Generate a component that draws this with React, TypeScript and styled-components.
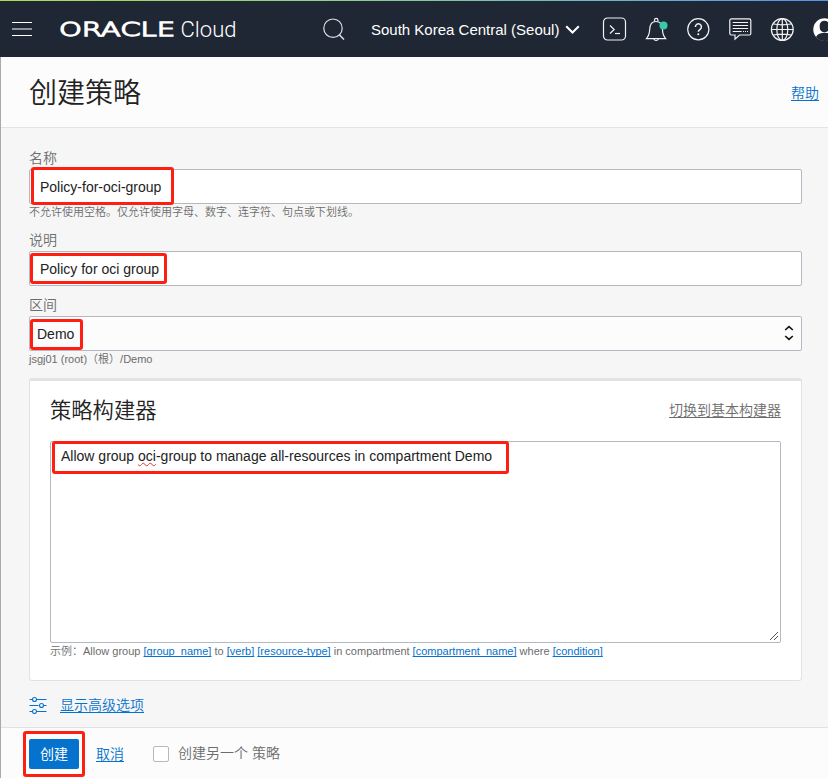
import React from "react";
import styled, { createGlobalStyle } from "styled-components";

const GlobalStyle = createGlobalStyle`
  * { box-sizing: border-box; }
  html, body { margin: 0; padding: 0; }
  body {
    width: 828px;
    height: 778px;
    overflow: hidden;
    background: #f6f6f6;
    color: #222;
    font-family: "Liberation Sans", "Noto Sans CJK SC", sans-serif;
    font-size: 14px;
    font-weight: 350;
  }
`;

const Page = styled.div`
  width: 828px;
  height: 778px;
  display: flex;
  flex-direction: column;
  overflow: hidden;
`;

const Header = styled.header`
  height: 57px;
  flex: none;
  display: flex;
  align-items: center;
  padding: 1px 0 0 12px;
  background:
    linear-gradient(90deg, #aedb55 0%, #8ed08a 40%, #6fb7c4 72%, #4f94f0 100%) top / 100% 1px no-repeat,
    #1e2733;
  overflow: hidden;
  & > svg { flex: none; display: block; }
`;

const Logo = styled.svg`
  margin-left: 26px;
`;

const SearchIcon = styled.svg`
  margin-left: 84px;
`;

const Region = styled.div`
  margin-left: 25px;
  padding-top: 2px;
  width: 209px;
  flex: none;
  display: flex;
  align-items: center;
  justify-content: space-between;
  color: #fff;
  font-size: 15px;
  line-height: 20px;
  white-space: nowrap;
`;

const HeaderIcons = styled.nav`
  display: flex;
  gap: 16px;
  margin-left: 20.5px;
  flex: none;
  & > svg { display: block; flex: none; }
`;

const Main = styled.main`
  flex: 1;
  display: flex;
  flex-direction: column;
  border-left: 1px solid #a9a9a9;
`;

const TitleBar = styled.div`
  height: 71px;
  flex: none;
  display: flex;
  align-items: center;
  justify-content: space-between;
  padding: 2px 9px 0 28px;
  background: #fcfcfc;
  border-bottom: 1px solid #e4e4e4;
`;

const Title = styled.h1`
  margin: 2px 0 0;
  font-size: 28px;
  line-height: 40px;
  font-weight: 350;
  color: #222;
`;

const Link = styled.a<{ $muted?: boolean }>`
  color: ${(p) => (p.$muted ? "#6c6c6c" : "#0572ce")};
  margin-top: ${(p) => (p.$muted ? 3 : 0)}px;
  font-size: 14px;
  line-height: 20px;
  text-decoration: underline;
  text-underline-offset: 2px;
  text-decoration-skip-ink: none;
  white-space: nowrap;
`;

const Form = styled.div`
  height: 599px;
  flex: none;
  padding: 20px 26px 0 28px;
`;

const Field = styled.section<{ $height: number }>`
  height: ${(p) => p.$height}px;
`;

const Label = styled.label`
  display: block;
  height: 21px;
  line-height: 21px;
  color: #6c6c6c;
`;

const Control = styled.div<{ $select?: boolean }>`
  position: relative;
  height: 35px;
  display: flex;
  align-items: center;
  justify-content: space-between;
  padding: ${(p) => (p.$select ? "0 7px" : "0 10px")};
  border: 1px solid #b2b9c3;
  border-radius: 2px;
  background: ${(p) => (p.$select ? "#fcfcfc" : "#fff")};
`;

const SelectArrows = styled.svg`
  margin-bottom: 2px;
`;

const Value = styled.span`
  line-height: 20px;
  white-space: nowrap;
`;

const Hint = styled.div`
  height: 17px;
  line-height: 17px;
  font-size: 11px;
  color: #6c6c6c;
  white-space: nowrap;
`;

const Highlight = styled.div<{ $x: number; $y: number; $w: number; $h: number }>`
  position: absolute;
  left: ${(p) => p.$x}px;
  top: ${(p) => p.$y}px;
  width: ${(p) => p.$w}px;
  height: ${(p) => p.$h}px;
  border: 3px solid #ff1e12;
  border-radius: 3px;
  pointer-events: none;
`;

const Panel = styled.section`
  height: 303px;
  padding: 16px 20px 0;
  background: #fff;
  border: 1px solid #e1e2e6;
  border-top-width: 3px;
  border-radius: 3px;
`;

const PanelHead = styled.div`
  height: 44px;
  display: flex;
  justify-content: space-between;
  align-items: flex-start;
`;

const PanelTitle = styled.h2`
  margin: 0;
  font-size: 21.3px;
  line-height: 28px;
  font-weight: 350;
  color: #222;
`;

const Editor = styled.div`
  position: relative;
  height: 202px;
  display: flex;
  justify-content: space-between;
  padding: 4px 0 0 10px;
  border: 1px solid #b2b9c3;
  border-radius: 2px;
`;

const Misspelled = styled.span`
  text-decoration: underline wavy #e5332a 1px;
  text-underline-offset: 1px;
  text-decoration-skip-ink: none;
`;

const ResizeGrip = styled.svg`
  align-self: flex-end;
`;

const Token = styled.a`
  color: #0572ce;
  text-decoration: underline;
  text-underline-offset: 1px;
  text-decoration-skip-ink: none;
`;

const Advanced = styled.div`
  height: 47px;
  display: flex;
  align-items: center;
  gap: 13px;
`;

const Footer = styled.footer`
  flex: 1;
  display: flex;
  align-items: center;
  padding: 2px 0 0 28px;
  background: #fcfcfc;
  border-top: 1px solid #e2e2e2;
`;

const SubmitWrap = styled.div`
  position: relative;
  margin-right: 17px;
`;

const Submit = styled.button`
  display: block;
  width: 50px;
  height: 30px;
  padding: 0;
  border: 0;
  border-radius: 2px;
  background: #0572ce;
  color: #fff;
  font: 400 14px/28px "Liberation Sans", "Noto Sans CJK SC", sans-serif;
`;

const CheckBox = styled.span`
  width: 16px;
  height: 16px;
  margin: 0 9px 0 29px;
  border: 1px solid #b2b9c3;
  border-radius: 2px;
  background: #fff;
`;

const CheckLabel = styled.span`
  line-height: 20px;
  margin-top: -2px;
  color: #6c6c6c;
`;

function Brand() {
  return (
    <Logo width="180" height="30" viewBox="0 0 180 30" fill="#fff" role="img" aria-label="ORACLE Cloud">
      <text x="1" y="22.4" fontFamily="DejaVu Sans" fontWeight="200" fontSize="19.500" stroke="#fff" strokeWidth="1.300" textLength="116" lengthAdjust="spacingAndGlyphs">ORACLE</text>
      <text x="122.500" y="22.900" fontFamily="Roboto" fontWeight="300" fontSize="22" textLength="56" lengthAdjust="spacingAndGlyphs">Cloud</text>
    </Logo>
  );
}

function HeaderActions() {
  const stroke = { fill: "none", stroke: "#f2f2f2", strokeWidth: 1.2 };
  return (
    <HeaderIcons>
      <svg width="26" height="26" viewBox="0 0 26 26" {...stroke}>
        <rect x="2.500" y="2" width="22" height="22" rx="4" />
        <path d="M9 9.500l4.200 4L9 17.500" />
        <path d="M14 17.500h5" />
      </svg>
      <svg width="26" height="26" viewBox="0 0 26 26" {...stroke}>
        <path d="M3.500 22.600c2.500-2.800 3-4.800 3.200-9.300C6.900 8.500 9.200 5.500 13 5.500s6.200 3 6.400 7.800c.2 4.500.7 6.500 3.200 9.300z" />
        <path d="M11.500 5.300V4.100a1.700 1.700 0 0 1 3.400 0v1.200M10.800 22.800a2.400 2.400 0 0 0 4.600 0" />
        <circle cx="20.500" cy="9.400" r="4" fill="#36c9ab" stroke="none" />
      </svg>
      <svg width="26" height="26" viewBox="0 0 26 26" {...stroke}>
        <circle cx="13.300" cy="13.300" r="10.600" />
        <path d="M10.400 11a3 3 0 1 1 4.700 2.300c-1.300.9-1.800 1.400-1.800 2.500" strokeWidth="1.500" />
        <circle cx="13.300" cy="18.300" r="1" fill="#fff" stroke="none" />
      </svg>
      <svg width="26" height="26" viewBox="0 0 26 26" {...stroke}>
        <path d="M4.300 2.900h18a1.500 1.500 0 0 1 1.500 1.500v13.100a1.500 1.500 0 0 1-1.500 1.500H12.500L8 23.200V19H4.300a1.500 1.500 0 0 1-1.500-1.500V4.400a1.500 1.500 0 0 1 1.500-1.500z" />
        <path d="M5.700 6.500h15.400M5.700 9.500h15.400M5.700 12.500h15.400M5.700 15.500h9" strokeWidth="1" />
        <path d="M16 15.500h5" strokeWidth="1" strokeDasharray="1 1" />
      </svg>
      <svg width="26" height="26" viewBox="0 0 26 26" {...stroke}>
        <circle cx="13.300" cy="13.500" r="10.900" />
        <ellipse cx="13.300" cy="13.500" rx="5.500" ry="10.900" />
        <path d="M13.300 2.600v21.800M2.400 13.500h21.800M4.500 8c5.500 1 12.100 1 17.600 0M4.500 19c5.500-1 12.100-1 17.600 0" />
      </svg>
      <svg width="26" height="26" viewBox="0 0 26 26">
        <circle cx="13.500" cy="13.500" r="11.200" fill="#fff" />
        <path d="M8.700 9a4.800 4.300 0 0 1 9.600 0v2.500a4.800 5 0 0 1-9.600 0zM5 21c1-2.500 3.500-3.500 6-4h5c2.500.5 5 1.500 6 4a11 11 0 0 1-17 0z" fill="#1e2733" />
      </svg>
    </HeaderIcons>
  );
}

export default function App() {
  return (
    <Page>
      <GlobalStyle />
      <Header>
        <svg width="20" height="20" viewBox="0 0 20 20" stroke="#fff">
          <path d="M0 3.500h20M0 16.500h20" />
          <path d="M0 10h20" strokeWidth="2" stroke="#8f9399" />
        </svg>
        <Brand />
        <SearchIcon width="24" height="24" viewBox="0 0 24 24" fill="none" stroke="#dfe1e3" strokeWidth="1.200">
          <circle cx="11" cy="11.200" r="9.200" />
          <path d="M17.500 18l4.500 4.500" strokeWidth="1.600" />
        </SearchIcon>
        <Region>
          South Korea Central (Seoul)
          <svg width="15" height="10" viewBox="0 0 15 10" fill="none" stroke="#fff" strokeWidth="2">
            <path d="M1.200 1.200l6.300 6.300 6.300-6.300" />
          </svg>
        </Region>
        <HeaderActions />
      </Header>
      <Main>
        <TitleBar>
          <Title>创建策略</Title>
          <Link>帮助</Link>
        </TitleBar>
        <Form>
          <Field $height={82}>
            <Label>名称</Label>
            <Control>
              <Value>Policy-for-oci-group</Value>
              <Highlight $x={1} $y={-3} $w={143} $h={38} />
            </Control>
            <Hint>不允许使用空格。仅允许使用字母、数字、连字符、句点或下划线。</Hint>
          </Field>
          <Field $height={65}>
            <Label>说明</Label>
            <Control>
              <Value>Policy for oci group</Value>
              <Highlight $x={0} $y={1} $w={137} $h={31} />
            </Control>
          </Field>
          <Field $height={83}>
            <Label>区间</Label>
            <Control $select>
              <Value>Demo</Value>
              <SelectArrows width="10" height="16" viewBox="0 0 10 16" fill="none" stroke="#111" strokeWidth="1.600">
                <path d="M1.200 5l3.800-3.400L8.800 5M1.200 11l3.800 3.400L8.800 11" />
              </SelectArrows>
              <Highlight $x={0} $y={2} $w={53} $h={31} />
            </Control>
            <Hint>jsgj01 (root)（根）/Demo</Hint>
          </Field>
          <Panel>
            <PanelHead>
              <PanelTitle>策略构建器</PanelTitle>
              <Link $muted>切换到基本构建器</Link>
            </PanelHead>
            <Editor>
              <Value>
                Allow group <Misspelled>oci</Misspelled>-group to manage all-resources in compartment Demo
              </Value>
              <ResizeGrip width="11" height="11" viewBox="0 0 11 11" stroke="#555" strokeWidth="1">
                <path d="M1 9l8-8M5 9l4-4" />
              </ResizeGrip>
              <Highlight $x={1} $y={-1} $w={457} $h={33} />
            </Editor>
            <Hint>
              示例：Allow group <Token>[group_name]</Token> to <Token>[verb]</Token> <Token>[resource-type]</Token> in
              compartment <Token>[compartment_name]</Token> where <Token>[condition]</Token>
            </Hint>
          </Panel>
          <Advanced>
            <svg width="18" height="18" viewBox="0 0 18 18" fill="none" stroke="#0572ce" strokeWidth="1.100">
              <path d="M.5 3.500h3M7.500 3.500h10M.5 9.500h9M15 9.500h2.500M.5 15.500h3M7.500 15.500h10" />
              <circle cx="5.500" cy="3.500" r="2" />
              <circle cx="12.500" cy="9.500" r="2" />
              <circle cx="5.500" cy="15.500" r="2" />
            </svg>
            <Link>显示高级选项</Link>
          </Advanced>
        </Form>
        <Footer>
          <SubmitWrap>
            <Submit>创建</Submit>
            <Highlight $x={-6} $y={-8} $w={62} $h={46} />
          </SubmitWrap>
          <Link>取消</Link>
          <CheckBox />
          <CheckLabel>创建另一个 策略</CheckLabel>
        </Footer>
      </Main>
    </Page>
  );
}
